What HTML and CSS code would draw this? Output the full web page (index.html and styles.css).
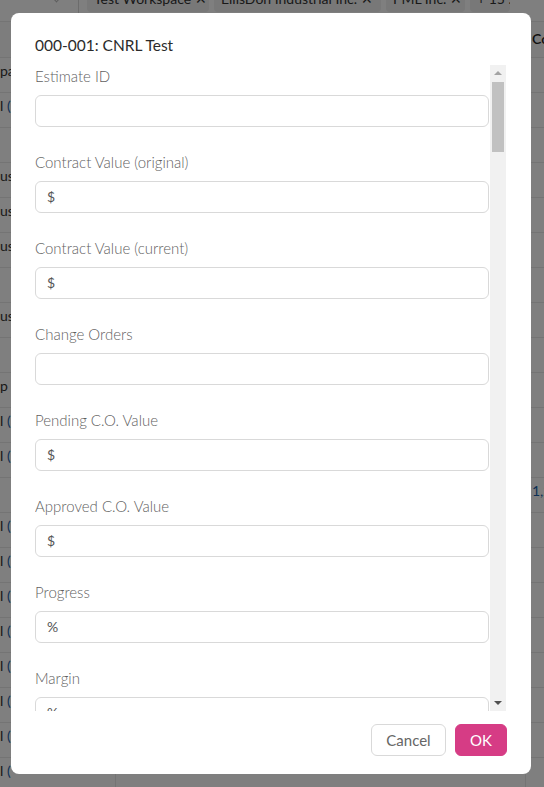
FILE: index.html
```html
<!DOCTYPE html>
<html>
<head>
<meta charset="utf-8">
<link rel="stylesheet" href="styles.css">
</head>
<body>
<div class="page">
  <div class="topbar">
    <div class="select"><span class="chev"></span></div>
    <div class="chips">
      <span class="chip chip-a">Test Workspace ✕</span>
      <span class="chip chip-b">EllisDon Industrial Inc. ✕</span>
      <span class="chip chip-c">PML Inc. ✕</span>
      <span class="chip chip-d">+ 15 ...</span>
    </div>
  </div>
  <div class="table">
    <div class="row head"><span class="c1"></span><span class="c2"></span><span class="c3">Contract</span></div>
    <div class="row"><span class="c1">pa</span><span class="c2"></span><span class="c3"></span></div>
    <div class="row"><span class="c1">l <b>(</b></span><span class="c2"></span><span class="c3"></span></div>
    <div class="row"><span class="c1"></span><span class="c2"></span><span class="c3"></span></div>
    <div class="row"><span class="c1">us</span><span class="c2"></span><span class="c3"></span></div>
    <div class="row"><span class="c1">us</span><span class="c2"></span><span class="c3"></span></div>
    <div class="row"><span class="c1">us</span><span class="c2"></span><span class="c3"></span></div>
    <div class="row"><span class="c1"></span><span class="c2"></span><span class="c3"></span></div>
    <div class="row"><span class="c1">us</span><span class="c2"></span><span class="c3"></span></div>
    <div class="row"><span class="c1"></span><span class="c2"></span><span class="c3"></span></div>
    <div class="row"><span class="c1">p</span><span class="c2"></span><span class="c3"></span></div>
    <div class="row"><span class="c1">l <b>(</b></span><span class="c2"></span><span class="c3"></span></div>
    <div class="row"><span class="c1">l <b>(</b></span><span class="c2"></span><span class="c3"></span></div>
    <div class="row"><span class="c1"></span><span class="c2"></span><span class="c3">1,2</span></div>
    <div class="row"><span class="c1">l <b>(</b></span><span class="c2"></span><span class="c3"></span></div>
    <div class="row"><span class="c1">l <b>(</b></span><span class="c2"></span><span class="c3"></span></div>
    <div class="row"><span class="c1">l <b>(</b></span><span class="c2"></span><span class="c3"></span></div>
    <div class="row"><span class="c1">l <b>(</b></span><span class="c2"></span><span class="c3"></span></div>
    <div class="row"><span class="c1">l <b>(</b></span><span class="c2"></span><span class="c3"></span></div>
    <div class="row"><span class="c1">l <b>(</b></span><span class="c2"></span><span class="c3"></span></div>
    <div class="row"><span class="c1">l <b>(</b></span><span class="c2"></span><span class="c3"></span></div>
    <div class="row"><span class="c1">l <b>(</b></span><span class="c2"></span><span class="c3"></span></div>
  </div>
</div>

<div class="overlay">
  <div class="modal">
    <div class="modal-title">000-001: CNRL Test</div>
    <div class="modal-body">
      <div class="scroll-content">
        <div class="field"><label>Estimate ID</label><div class="input"></div></div>
        <div class="field"><label>Contract Value (original)</label><div class="input">$</div></div>
        <div class="field"><label>Contract Value (current)</label><div class="input">$</div></div>
        <div class="field"><label>Change Orders</label><div class="input"></div></div>
        <div class="field"><label>Pending C.O. Value</label><div class="input">$</div></div>
        <div class="field"><label>Approved C.O. Value</label><div class="input">$</div></div>
        <div class="field"><label>Progress</label><div class="input">%</div></div>
        <div class="field"><label>Margin</label><div class="input">%</div></div>
        <div class="field"><label>Cost to Date</label><div class="input">$</div></div>
        <div class="field"><label>Forecast Cost</label><div class="input">$</div></div>
      </div>
      <div class="scrollbar">
        <div class="sb-btn"><span class="arrow-up"></span></div>
        <div class="sb-track"><div class="sb-thumb"></div></div>
        <div class="sb-btn"><span class="arrow-down"></span></div>
      </div>
    </div>
    <div class="modal-footer">
      <button class="btn btn-cancel">Cancel</button>
      <button class="btn btn-ok">OK</button>
    </div>
  </div>
</div>
</body>
</html>
```

FILE: styles.css
```css
html, body {
  margin: 0;
  padding: 0;
}
body {
  width: 544px;
  height: 787px;
  overflow: hidden;
  background: #ffffff;
  font-family: Lato, "Noto Sans", "Liberation Sans", sans-serif;
  color: #333;
}

/* background page */
.page {
  width: 544px;
}
.topbar {
  height: 22px;
  display: flex;
  border-bottom: 1px solid #e8e8e8;
  box-sizing: border-box;
}
.select {
  width: 78px;
  border-right: 1px solid #d9d9d9;
  position: relative;
}
.chev {
  position: absolute;
  left: 53px;
  top: -6px;
  width: 6px;
  height: 6px;
  border-right: 1px solid #bbb;
  border-bottom: 1px solid #bbb;
  transform: rotate(45deg);
}
.chips {
  display: flex;
  gap: 5px;
  padding-left: 8px;
  margin-top: -12px;
}
.chip {
  height: 24px;
  line-height: 22px;
  background: #f0f0f0;
  border-radius: 4px;
  padding: 0 7px;
  font-size: 14px;
  color: #333;
  white-space: nowrap;
  overflow: hidden;
  box-sizing: border-box;
}
.chip-a { width: 122px; }
.chip-b { width: 167px; }
.chip-c { width: 79px; }
.chip-d { width: 40px; }

.table {
  display: flex;
  flex-direction: column;
}
.row {
  height: 35px;
  display: grid;
  grid-template-columns: 115px 410px 1fr;
  border-bottom: 1px solid #e8e8e8;
  box-sizing: border-box;
  font-size: 14px;
}
.row.head {
  height: 36px;
  background: #fafafa;
}
.row span {
  padding-top: 4px;
  white-space: nowrap;
  overflow: hidden;
}
.row .c2 {
  border-left: 1px solid #e8e8e8;
}
.row .c3 {
  border-left: 1px solid #e8e8e8;
  padding-left: 6px;
  color: #1a5fa8;
}
.row.head .c3 {
  padding-top: 8px;
  color: #222;
  font-weight: 600;
}
.row .c1 b {
  font-weight: normal;
  color: #1a5fa8;
}

/* modal */
.overlay {
  position: fixed;
  inset: 0;
  background: rgba(0, 0, 0, 0.5);
  padding: 13px 13px 13px 11px;
  box-sizing: border-box;
}
.modal {
  width: 520px;
  height: 761px;
  background: #fff;
  border-radius: 8px;
  padding: 20px 24px 18px 24px;
  box-sizing: border-box;
  display: flex;
  flex-direction: column;
}
.modal-title {
  font-size: 15.5px;
  line-height: 24px;
  color: #2b2b2b;
  margin-bottom: 8px;
}
.modal-body {
  flex: 1;
  min-height: 0;
  display: flex;
  gap: 1px;
  margin-right: 1px;
}
.scroll-content {
  flex: 1;
  min-width: 0;
  overflow: hidden;
}
.scrollbar {
  width: 16px;
  background: #f1f1f1;
  display: flex;
  flex-direction: column;
}
.sb-btn {
  height: 16px;
  display: flex;
  align-items: center;
  justify-content: center;
}
.arrow-up {
  width: 0;
  height: 0;
  border-left: 4px solid transparent;
  border-right: 4px solid transparent;
  border-bottom: 4px solid #a3a3a3;
}
.arrow-down {
  width: 0;
  height: 0;
  border-left: 4px solid transparent;
  border-right: 4px solid transparent;
  border-top: 4px solid #505050;
}
.sb-track {
  flex: 1;
  padding: 1px 2px 0 2px;
}
.sb-thumb {
  height: 70px;
  background: #c1c1c1;
}
.field {
  margin-bottom: 24px;
}
.field label {
  display: block;
  font-size: 15px;
  font-weight: 300;
  line-height: 22px;
  color: #5f5f5f;
  margin-bottom: 8px;
}
.input {
  height: 32px;
  border: 1px solid #d9d9d9;
  border-radius: 6px;
  box-sizing: border-box;
  padding: 0 11px;
  line-height: 30px;
  font-size: 14px;
  color: #555;
}
.modal-footer {
  display: flex;
  justify-content: flex-end;
  gap: 9px;
  padding-top: 13px;
}
.btn {
  height: 32px;
  border-radius: 6px;
  font-family: Lato, "Noto Sans", "Liberation Sans", sans-serif;
  font-size: 15px;
  box-sizing: border-box;
  cursor: pointer;
}
.btn-cancel {
  width: 75px;
  background: #fff;
  border: 1px solid #d9d9d9;
  color: #666;
}
.btn-ok {
  width: 52px;
  background: #d63c85;
  border: 1px solid #d63c85;
  color: #fff;
}
```
